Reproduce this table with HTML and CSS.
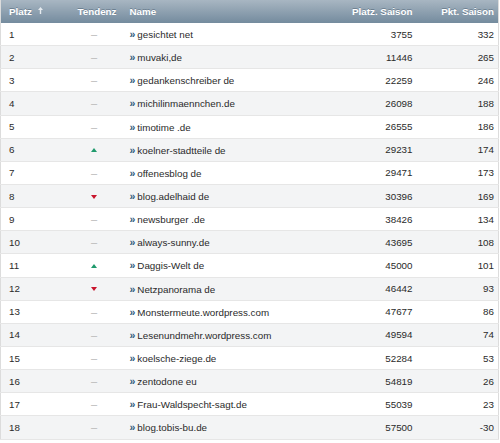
FILE: index.html
```html
<!DOCTYPE html>
<html>
<head>
<meta charset="utf-8">
<link rel="stylesheet" href="styles.css">
</head>
<body>
<table class="rank">
  <colgroup>
    <col class="c-platz"><col class="c-tend"><col class="c-name"><col class="c-ps"><col class="c-pk">
  </colgroup>
  <thead>
    <tr>
      <th class="l">Platz <svg class="sort" width="5" height="7" viewBox="0 0 5 7"><path d="M2.5 0 L5 3 L3.2 3 L3.2 7 L1.8 7 L1.8 3 L0 3 Z" fill="#e6ebef"/></svg></th>
      <th class="c">Tendenz</th>
      <th class="l">Name</th>
      <th class="r">Platz. Saison</th>
      <th class="r">Pkt. Saison</th>
    </tr>
  </thead>
  <tbody>
    <tr><td>1</td><td class="c"><span class="dash">–</span></td><td><span class="ar">»</span>gesichtet net</td><td class="r">3755</td><td class="r">332</td></tr>
    <tr><td>2</td><td class="c"><span class="dash">–</span></td><td><span class="ar">»</span>muvaki,de</td><td class="r">11446</td><td class="r">265</td></tr>
    <tr><td>3</td><td class="c"><span class="dash">–</span></td><td><span class="ar">»</span>gedankenschreiber de</td><td class="r">22259</td><td class="r">246</td></tr>
    <tr><td>4</td><td class="c"><span class="dash">–</span></td><td><span class="ar">»</span>michilinmaennchen.de</td><td class="r">26098</td><td class="r">188</td></tr>
    <tr><td>5</td><td class="c"><span class="dash">–</span></td><td><span class="ar">»</span>timotime .de</td><td class="r">26555</td><td class="r">186</td></tr>
    <tr><td>6</td><td class="c"><span class="up"></span></td><td><span class="ar">»</span>koelner-stadtteile de</td><td class="r">29231</td><td class="r">174</td></tr>
    <tr><td>7</td><td class="c"><span class="dash">–</span></td><td><span class="ar">»</span>offenesblog de</td><td class="r">29471</td><td class="r">173</td></tr>
    <tr><td>8</td><td class="c"><span class="down"></span></td><td><span class="ar">»</span>blog.adelhaid de</td><td class="r">30396</td><td class="r">169</td></tr>
    <tr><td>9</td><td class="c"><span class="dash">–</span></td><td><span class="ar">»</span>newsburger .de</td><td class="r">38426</td><td class="r">134</td></tr>
    <tr><td>10</td><td class="c"><span class="dash">–</span></td><td><span class="ar">»</span>always-sunny.de</td><td class="r">43695</td><td class="r">108</td></tr>
    <tr><td>11</td><td class="c"><span class="up"></span></td><td><span class="ar">»</span>Daggis-Welt de</td><td class="r">45000</td><td class="r">101</td></tr>
    <tr><td>12</td><td class="c"><span class="down"></span></td><td><span class="ar">»</span>Netzpanorama de</td><td class="r">46442</td><td class="r">93</td></tr>
    <tr><td>13</td><td class="c"><span class="dash">–</span></td><td><span class="ar">»</span>Monstermeute.wordpress.com</td><td class="r">47677</td><td class="r">86</td></tr>
    <tr><td>14</td><td class="c"><span class="dash">–</span></td><td><span class="ar">»</span>Lesenundmehr.wordpress.com</td><td class="r">49594</td><td class="r">74</td></tr>
    <tr><td>15</td><td class="c"><span class="dash">–</span></td><td><span class="ar">»</span>koelsche-ziege.de</td><td class="r">52284</td><td class="r">53</td></tr>
    <tr><td>16</td><td class="c"><span class="dash">–</span></td><td><span class="ar">»</span>zentodone eu</td><td class="r">54819</td><td class="r">26</td></tr>
    <tr><td>17</td><td class="c"><span class="dash">–</span></td><td><span class="ar">»</span>Frau-Waldspecht-sagt.de</td><td class="r">55039</td><td class="r">23</td></tr>
    <tr><td>18</td><td class="c"><span class="dash">–</span></td><td><span class="ar">»</span>blog.tobis-bu.de</td><td class="r">57500</td><td class="r">-30</td></tr>
  </tbody>
</table>
</body>
</html>
```
FILE: styles.css
```css
html, body {
  margin: 0;
  padding: 0;
  background: #fff;
}
.rank {
  width: 499px;
  border-collapse: collapse;
  table-layout: fixed;
  font-family: "Liberation Sans", Arial, sans-serif;
  font-size: 9.8px;
  color: #2a2a2a;
  border-left: 1px solid #dcdcdc;
  border-right: 1px solid #dcdcdc;
}
.c-platz { width: 69px; }
.c-tend { width: 52px; }
.c-name { width: 220px; }
.c-ps { width: 79px; }
.c-pk { width: 78px; }
.rank thead th {
  height: 23px;
  padding: 0 8px;
  background: linear-gradient(#a8b6c2, #748b9e);
  color: #fff;
  font-weight: bold;
  text-shadow: 0 -1px 0 rgba(40, 60, 80, 0.35);
  white-space: nowrap;
}
.rank thead th:last-child { padding-right: 4px; }
.rank td {
  height: 22.15px;
  padding: 0 8px;
  border-bottom: 1px solid #e6e6e6;
  white-space: nowrap;
}
.rank td:last-child { padding-right: 4px; }
.rank tbody tr:nth-child(even) td { background: #f3f4f5; }
.l { text-align: left; }
.c { text-align: center; }
.r { text-align: right; }
.sort {
  margin-left: 3px;
  vertical-align: 1px;
}
.dash {
  color: #b8b8b8;
  font-size: 11px;
  margin-right: 3px;
}
.ar {
  color: #2e5a78;
  font-weight: bold;
  font-size: 10.5px;
  margin-right: 2px;
}
.up, .down {
  display: inline-block;
  width: 0;
  height: 0;
  margin-right: 3px;
  border-left: 3px solid transparent;
  border-right: 3px solid transparent;
}
.up {
  border-bottom: 4px solid #1f9a6c;
  vertical-align: 1px;
}
.down {
  border-top: 4px solid #c8142c;
  vertical-align: 1px;
}
```
